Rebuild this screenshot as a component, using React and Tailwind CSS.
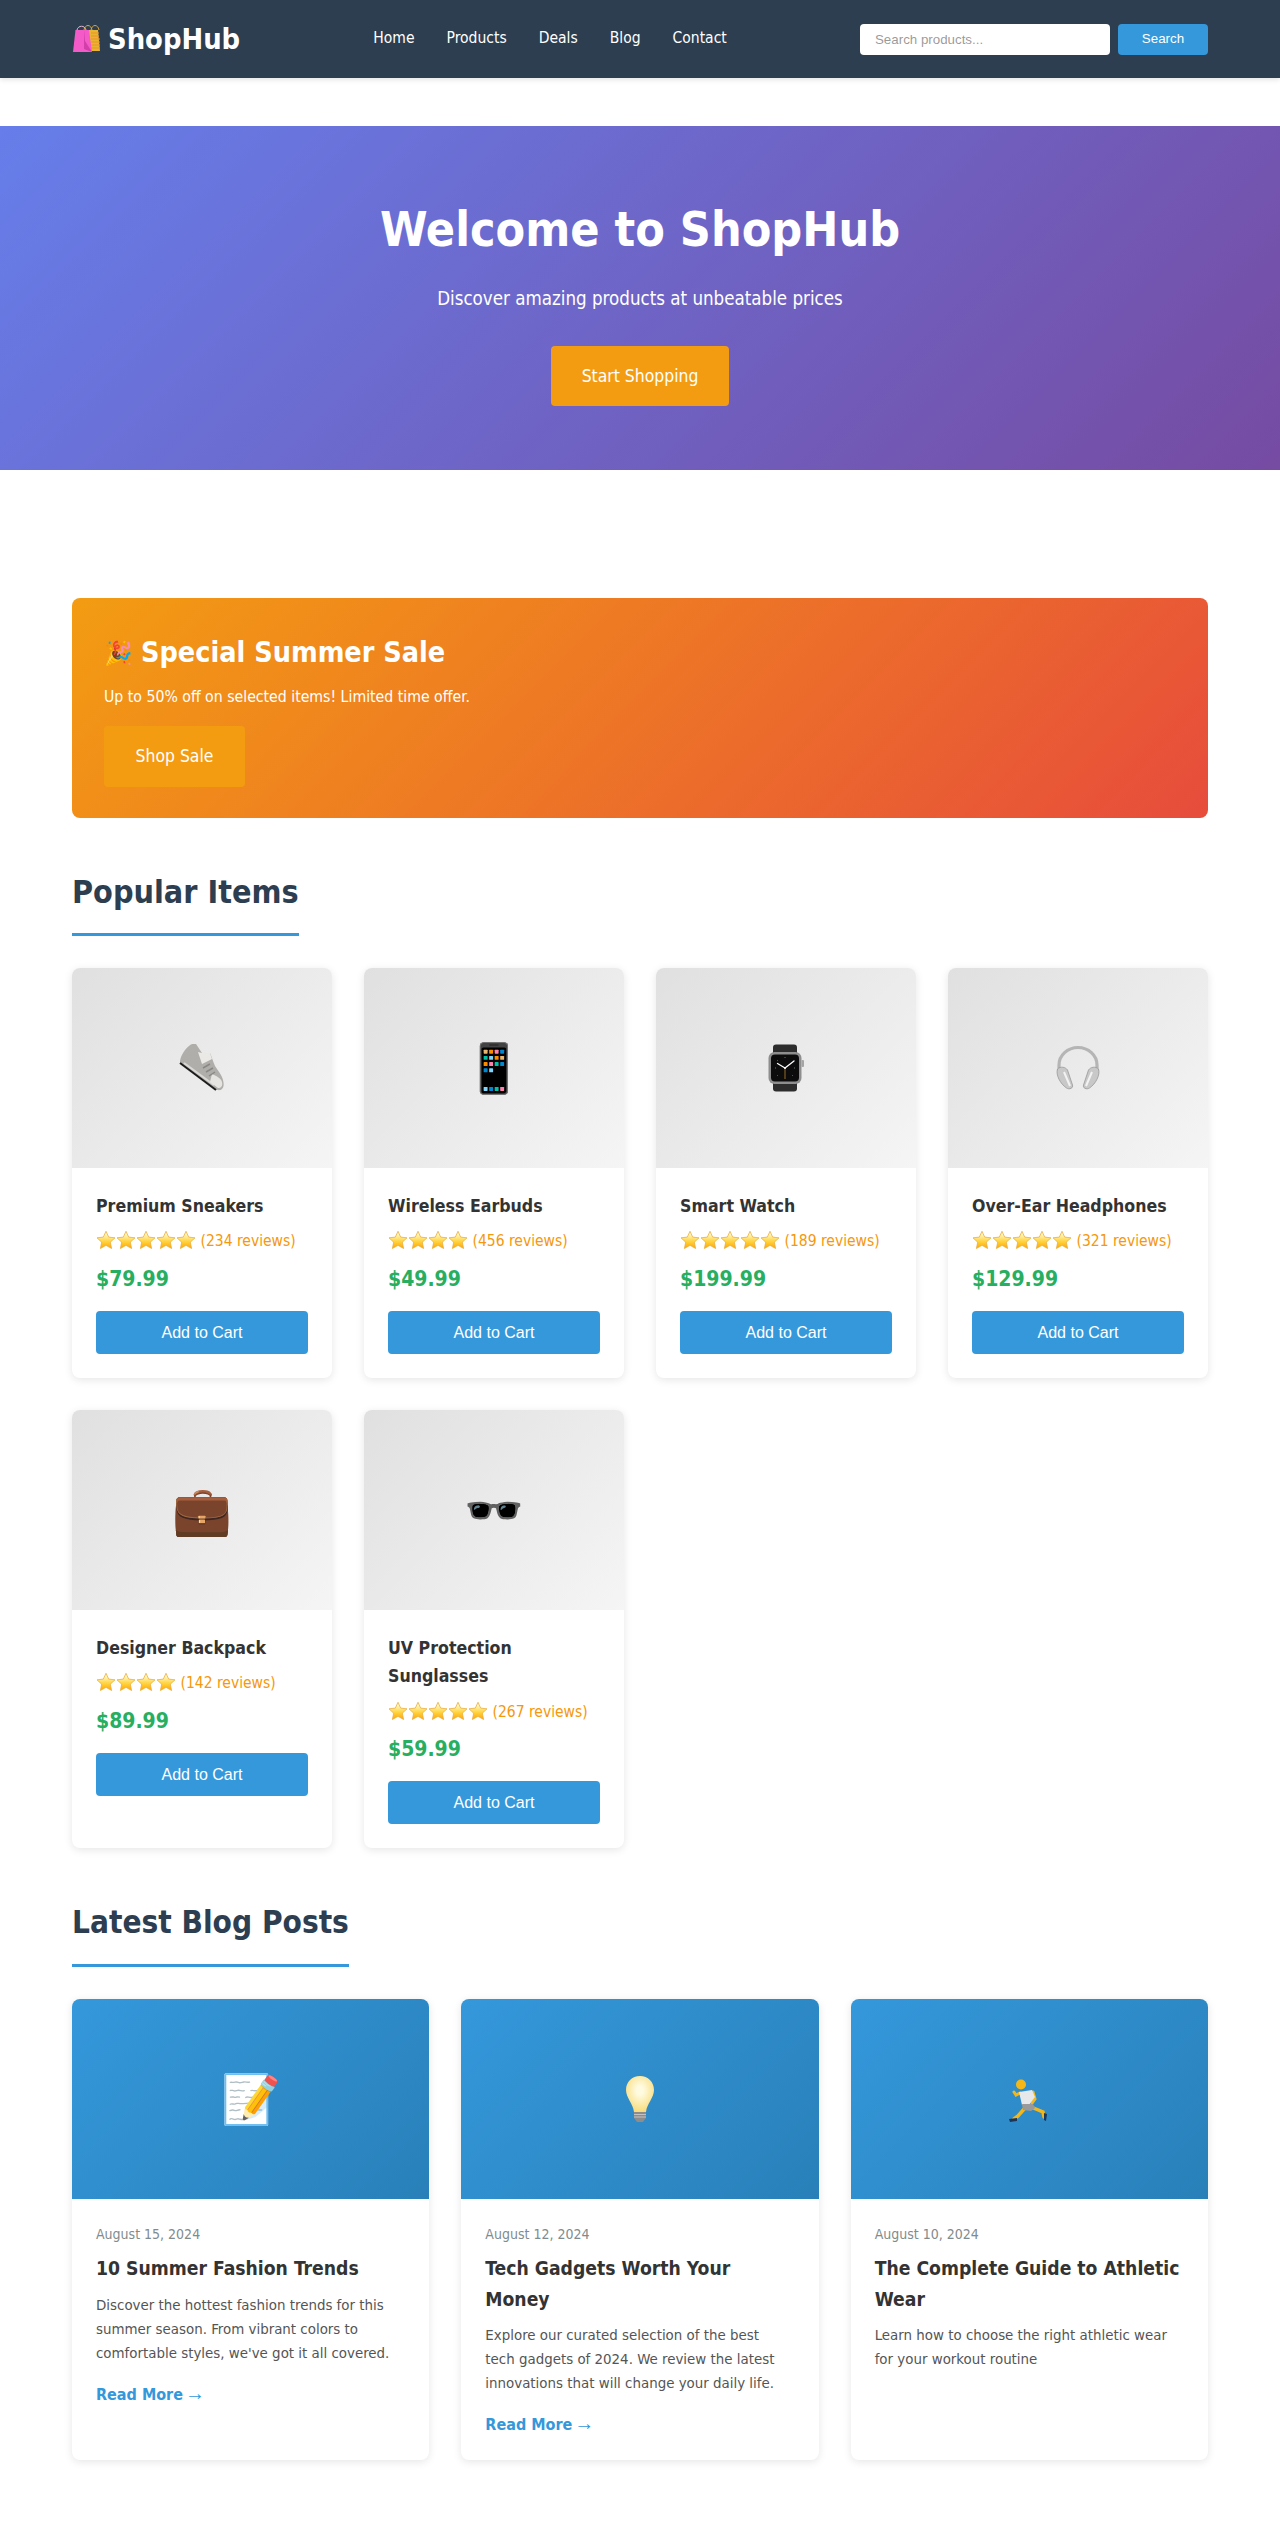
const font = "font-['DejaVu_Sans'] font-stretch-condensed";

const navLinks = ['Home', 'Products', 'Deals', 'Blog', 'Contact'];

const Star = ({ id }) => (
  <svg viewBox="0 0 24 24" className="inline-block h-5 w-5 align-[-4px]">
    <defs>
      <linearGradient id={id} x1="0" y1="0" x2="0" y2="1">
        <stop offset="0.2" stopColor="#fff6b8" />
        <stop offset="0.6" stopColor="#ffd23c" />
        <stop offset="1" stopColor="#ffa600" />
      </linearGradient>
    </defs>
    <path
      d="M12 1.5l3.2 7 7.6.9-5.6 5.2 1.5 7.6L12 18.4l-6.700 3.800 1.500-7.600L1.200 9.400l7.600-.9z"
      fill={`url(#${id})`}
      stroke="#e9a93a"
      strokeWidth="0.9"
      strokeLinejoin="round"
    />
  </svg>
);

const BagIcon = () => (
  <svg viewBox="7 6 31 36" className="mr-[5px] h-9 w-[31px]">
    <path d="M19 15c1-6 7-6 8 0M26 15c1-6 7-6 8 0" fill="none" stroke="#d9a63a" strokeWidth="1" />
    <path d="M23 15h10l2 21H25z" fill="#e8b530" />
    <path d="M26 18h8M26 21h8M26 24h9M26 27h9M26 30h9M26 33h9" stroke="#ee8f2e" strokeWidth="1.200" />
    <path d="M12 15c1-5 8-5 9 0" fill="none" stroke="#e9b7d8" strokeWidth="1" />
    <path d="M10.500 15H24l3 22H8z" fill="#f45bc9" />
    <path d="M19 15l1 11 7 11-8-3z" fill="#d23fa8" />
  </svg>
);

const SneakerIcon = () => (
  <svg viewBox="18 14 48 48" className="h-12 w-12">
    <path d="M20 31C21 25 25 19 29 16C31 14 34 13 36 14L42 23C45 24 48 23 50 23C52 27 53 32 55 36C58 41 62 45 63 50C64 54 64 57 62 59C60 61 57 60 55 59L20 33Z" fill="#b0aeab" />
    <path d="M20 33L56 60" stroke="#1c1c1c" strokeWidth="2" />
    <path d="M24 33L54 55" stroke="#dad8d5" strokeWidth="2" />
    <path d="M52 44C56 46 61 48 62 52C63 56 61 58 58 58L50 52Z" fill="#e6e4e1" />
    <path d="M38 22L42 23L50 23L52 29L42 34Z" fill="#ebe9e6" />
    <path d="M43 38l7-4M46 42l7-4M49 46l6-4" stroke="#8a8885" strokeWidth="1.500" />
  </svg>
);

const WatchIcon = () => (
  <svg viewBox="0 0 48 48" className="h-12 w-12">
    <rect x="11" y="0.500" width="24" height="12" rx="3" fill="#2d2d2d" />
    <rect x="11" y="35.500" width="24" height="12" rx="3" fill="#2d2d2d" />
    <rect x="6.500" y="8" width="33" height="32" rx="6" fill="#8e8e8e" />
    <rect x="9" y="10.500" width="28" height="27" rx="4" fill="#0c0c0c" />
    <rect x="39.500" y="16" width="2.500" height="7" rx="1" fill="#a5a5a5" />
    <path d="M23 24L15.500 19.500M23 24l9-7" stroke="#fff" strokeWidth="1.300" strokeLinecap="round" />
    <path d="M23 24v11" stroke="#b8862c" strokeWidth="0.800" />
    <circle cx="23" cy="24" r="1" fill="#fff" />
    <path d="M23 13v1M13 24h1M33 24h-1M15 16l.7.700M31 32l-.7-.7M15 32l.7-.7" stroke="#888" strokeWidth="0.800" />
  </svg>
);

const HeadphonesIcon = () => (
  <svg viewBox="0 0 48 48" className="h-12 w-12">
    <path d="M5 29V21a19 17.500 0 0 1 38 0v8" fill="none" stroke="#b5b5b5" strokeWidth="3.200" />
    <path d="M3.500 25c3-3 8-2 10 1l5 15c1 3-3 5-6 3-6-4-11-13-9-19z" fill="#c8c8c8" stroke="#989898" strokeWidth="0.800" />
    <path d="M44.500 25c-3-3-8-2-10 1l-5 15c-1 3 3 5 6 3 6-4 11-13 9-19z" fill="#c8c8c8" stroke="#989898" strokeWidth="0.800" />
    <path d="M10 28l6 14M38 28l-6 14" stroke="#f2f2f2" strokeWidth="2" />
  </svg>
);

const BulbIcon = () => (
  <svg viewBox="0 0 48 48" className="h-12 w-12">
    <defs>
      <radialGradient id="bulb" cx="0.5" cy="0.4" r="0.6">
        <stop offset="0.2" stopColor="#fffbe0" />
        <stop offset="1" stopColor="#f8dc7c" />
      </radialGradient>
    </defs>
    <path d="M24 1c8 0 14 6 14 14 0 8-7 13-8 22H18c-1-9-8-14-8-22C10 7 16 1 24 1z" fill="url(#bulb)" />
    <path d="M18 37h12v6l-3 4h-6l-3-4z" fill="#8d8d8d" />
    <path d="M18 39.500h12M18 42h12" stroke="#d0d0d0" strokeWidth="0.800" />
  </svg>
);

const RunnerIcon = () => (
  <svg viewBox="15 14 48 48" className="h-12 w-12">
    <path d="M35 47l-7 8-4 3" fill="none" stroke="#f5b718" strokeWidth="3.500" strokeLinecap="round" />
    <path d="M41 46l12 5 1 5" fill="none" stroke="#f5b718" strokeWidth="3.500" strokeLinecap="round" />
    <path d="M30 32l-4 2-2-3" fill="none" stroke="#f5b718" strokeWidth="3" strokeLinecap="round" />
    <path d="M43 31l2 7-3 4" fill="none" stroke="#f5b718" strokeWidth="3" strokeLinecap="round" />
    <path d="M29 31l13-2 3 7-6 8h-7z" fill="#e6e8ea" />
    <path d="M32 43h11l2 4-4 3-8-1z" fill="#9a9a9a" />
    <circle cx="31" cy="23.500" r="5" fill="#f5b718" />
    <path d="M19 58l8-1 0 3-7 1zM54 52l3 1-1 7-2-1z" fill="#1d3557" />
  </svg>
);

const Emoji = ({ children }) => <span className="text-[48px]">{children}</span>;

const products = [
  { icon: <SneakerIcon />, name: 'Premium Sneakers', stars: 5, reviews: 234, price: '$79.99' },
  { icon: <Emoji>📱</Emoji>, name: 'Wireless Earbuds', stars: 4, reviews: 456, price: '$49.99' },
  { icon: <WatchIcon />, name: 'Smart Watch', stars: 5, reviews: 189, price: '$199.99' },
  { icon: <HeadphonesIcon />, name: 'Over-Ear Headphones', stars: 5, reviews: 321, price: '$129.99' },
  { icon: <Emoji>💼</Emoji>, name: 'Designer Backpack', stars: 4, reviews: 142, price: '$89.99' },
  { icon: <Emoji>🕶️</Emoji>, name: 'UV Protection Sunglasses', stars: 5, reviews: 267, price: '$59.99' },
];

const posts = [
  {
    icon: <Emoji>📝</Emoji>,
    date: 'August 15, 2024',
    title: '10 Summer Fashion Trends',
    text: "Discover the hottest fashion trends for this summer season. From vibrant colors to comfortable styles, we've got it all covered.",
    more: true,
  },
  {
    icon: <BulbIcon />,
    date: 'August 12, 2024',
    title: 'Tech Gadgets Worth Your Money',
    text: 'Explore our curated selection of the best tech gadgets of 2024. We review the latest innovations that will change your daily life.',
    more: true,
  },
  {
    icon: <RunnerIcon />,
    date: 'August 10, 2024',
    title: 'The Complete Guide to Athletic Wear',
    text: 'Learn how to choose the right athletic wear for your workout routine',
    more: false,
  },
];

const SectionTitle = ({ children, size }) => (
  <div className="mb-8">
    <h2 className={`inline-block border-b-[3px] border-[#3498db] pt-px pb-[15px] leading-[51.2px] font-bold text-[#2c3e50] ${size}`}>
      {children}
    </h2>
  </div>
);

const ProductCard = ({ item }) => (
  <div className="overflow-hidden rounded-lg bg-white shadow-[0_2px_8px_rgba(0,0,0,0.1)]">
    <div className="flex h-[200px] items-center justify-center bg-[linear-gradient(135deg,#e0e0e0,#f5f5f5)]">
      {item.icon}
    </div>
    <div className="p-6">
      <h3 className="mb-2 text-[17.6px] leading-[28.16px] font-bold text-[#333]">{item.name}</h3>
      <div className="mb-2 pt-px text-[15.5px] leading-[24.32px] text-[#f5980c]">
        {Array.from({ length: item.stars }, (_, i) => (
          <Star key={i} id={`star-${item.reviews}-${i}`} />
        ))}{' '}
        ({item.reviews} reviews)
      </div>
      <div className="mb-[13.7px] text-[21px] leading-[35.84px] font-bold text-[#27ae60]">{item.price}</div>
      <button className="h-[43px] w-full rounded bg-[#3498db] font-['Liberation_Sans'] text-[16px] text-white">
        Add to Cart
      </button>
    </div>
  </div>
);

const BlogCard = ({ post }) => (
  <div className="overflow-hidden rounded-lg bg-white shadow-[0_2px_8px_rgba(0,0,0,0.1)]">
    <div className="flex h-[200px] items-center justify-center bg-[linear-gradient(135deg,#3498db,#2980b9)]">
      {post.icon}
    </div>
    <div className="px-6 pt-6 pb-[22px]">
      <div className="mb-[9px] text-[14px] leading-[22.4px] text-[#7f8c8d]">{post.date}</div>
      <h3 className="mb-2 text-[19.2px] leading-[30.72px] font-bold text-[#333]">{post.title}</h3>
      <p className="mb-[17px] pr-1 text-[14.9px] leading-[24px] text-[#555]">{post.text}</p>
      {post.more && (
        <a className="text-[16px] leading-[26px] font-bold text-[#3498db]">
          Read More <span className="-ml-[3px] font-['Liberation_Sans'] text-[20px] leading-none font-normal">→</span>
        </a>
      )}
    </div>
  </div>
);

const App = () => {
  return (
    <div className={`min-h-[2541px] bg-white ${font} leading-relaxed text-[#333]`}>
      <header className="flex h-[78px] items-center justify-between bg-[#2c3e50] px-[72px] text-white shadow-[0_2px_5px_rgba(0,0,0,0.1)]">
        <div className="flex items-center text-[28.8px] font-bold">
          <BagIcon />
          ShopHub
        </div>
        <nav className="flex gap-8">
          {navLinks.map((link) => (
            <a key={link} className="text-[15.5px]">{link}</a>
          ))}
        </nav>
        <div className="flex gap-2">
          <input
            placeholder="Search products..."
            className="h-[31px] w-[250px] rounded bg-white px-[15px] font-['Liberation_Sans'] text-[13.33px] text-[#333]"
          />
          <button className="h-[31px] w-[90px] rounded bg-[#3498db] font-['Liberation_Sans'] text-[13.33px] text-white">
            Search
          </button>
        </div>
      </header>

      <section className="mt-12 flex h-[344px] flex-col items-center bg-[linear-gradient(135deg,#667eea,#764ba2)] pt-[65px] text-white">
        <h1 className="mb-[15px] text-[48px] leading-[77px] font-bold">Welcome to ShopHub</h1>
        <p className="mb-8 text-[18.6px] leading-[31px]">Discover amazing products at unbeatable prices</p>
        <button className="h-[60px] w-[178px] rounded bg-[#f39c12] text-[17.4px] text-white">Start Shopping</button>
      </section>

      <main className="px-[72px] pt-32">
        <section className="mb-12 h-[220px] rounded-lg bg-[linear-gradient(135deg,#f39c12,#e74c3c)] p-8 text-white">
          <h2 className="mb-2 flex items-center text-[28.5px] leading-[46px] font-bold">
            <span className="inline-block w-[37px] text-[23px] leading-none">🎉</span>
            Special Summer Sale
          </h2>
          <p className="mb-4 text-[15.7px] leading-[26px]">Up to 50% off on selected items! Limited time offer.</p>
          <button className="h-[61px] w-[141px] rounded bg-[#f39c12] text-[17.4px] text-white">Shop Sale</button>
        </section>

        <SectionTitle size="text-[32px]">Popular Items</SectionTitle>
        <div className="mb-12 grid grid-cols-4 gap-8">
          {products.map((item) => (
            <ProductCard key={item.name} item={item} />
          ))}
        </div>

        <SectionTitle size="text-[31.3px]">Latest Blog Posts</SectionTitle>
        <div className="grid grid-cols-3 gap-8">
          {posts.map((post) => (
            <BlogCard key={post.title} post={post} />
          ))}
        </div>
      </main>
    </div>
  );
};

export default App;
